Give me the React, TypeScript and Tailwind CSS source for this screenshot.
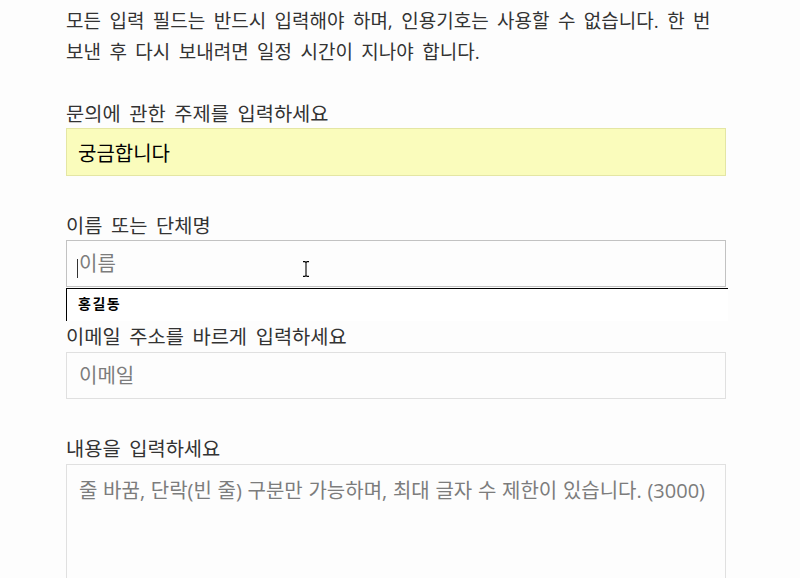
import { useState } from 'react';

const font = { fontFamily: '"Open Sans", "Noto Sans CJK KR", sans-serif' };

function IBeam() {
  return (
    <svg
      className="pointer-events-none absolute left-[302px] top-[261px]"
      width="8"
      height="16"
      viewBox="0 0 8 16"
      aria-hidden="true"
    >
      <path d="M1 0.6h2l1 1 1-1h2M4 1.6v12.8M1 15.4h2l1-1 1 1h2" fill="none" stroke="#000" strokeWidth="1.1" />
    </svg>
  );
}

export default function App() {
  const [subject, setSubject] = useState('궁금합니다');

  return (
    <div className="relative h-[578px] w-[800px] overflow-hidden bg-[#fdfdfd]" style={font}>
      <div className="ml-[66px] w-[660px] pt-[6px] text-[19px] text-[#333] [word-spacing:3.5px]">
        <p className="leading-[31px]">
          모든 입력 필드는 반드시 입력해야 하며, 인용기호는 사용할 수 없습니다. 한 번 보낸 후 다시 보내려면 일정 시간이 지나야 합니다.
        </p>

        <label className="mt-[32px] block text-[19.8px] leading-[28px]">문의에 관한 주제를 입력하세요</label>
        <input
          value={subject}
          onChange={(e) => setSubject(e.target.value)}
          className="block h-[48px] w-full border border-[#e4e6a4] bg-[#fafcbc] px-[11px] text-[20px] text-black outline-none"
        />

        <label className="mt-[36px] block text-[19.8px] leading-[28px]">이름 또는 단체명</label>
        <div className="relative">
          <input
            placeholder="이름"
            className="block h-[47px] w-full border border-[#c2c2c2] bg-[#fdfdfd] px-[12px] text-[20px] text-black outline-none placeholder:text-[#7c7c7c]"
          />
          <span className="absolute left-[11px] top-[19px] h-[19px] w-px bg-[#333]" />
        </div>

        <label className="mt-[36px] block text-[19.8px] leading-[28px]">이메일 주소를 바르게 입력하세요</label>
        <input
          placeholder="이메일"
          className="mt-[1px] block h-[47px] w-full border border-[#e0e0e0] bg-[#fdfdfd] px-[12px] text-[20px] outline-none placeholder:text-[#7c7c7c]"
        />

        <label className="mt-[36px] block text-[19.8px] leading-[28px]">내용을 입력하세요</label>
        <textarea
          placeholder="줄 바꿈, 단락(빈 줄) 구분만 가능하며, 최대 글자 수 제한이 있습니다. (3000)"
          className="mt-[1px] block h-[160px] w-full resize-none border border-[#e0e0e0] bg-[#fdfdfd] px-[12px] pt-[12px] text-[20px] leading-[28px] outline-none [word-spacing:0.5px] placeholder:text-[#7c7c7c]"
        />
      </div>

      {/* autofill suggestion popup */}
      <div className="absolute left-[66px] top-[288px] h-[33px] w-[662px] border-l border-t border-black bg-white">
        <div className="pl-[11px] pt-[6px] text-[14px] font-bold leading-[18px] tracking-[1.5px] text-black [word-spacing:0px]">홍길동</div>
      </div>

      <IBeam />
    </div>
  );
}
